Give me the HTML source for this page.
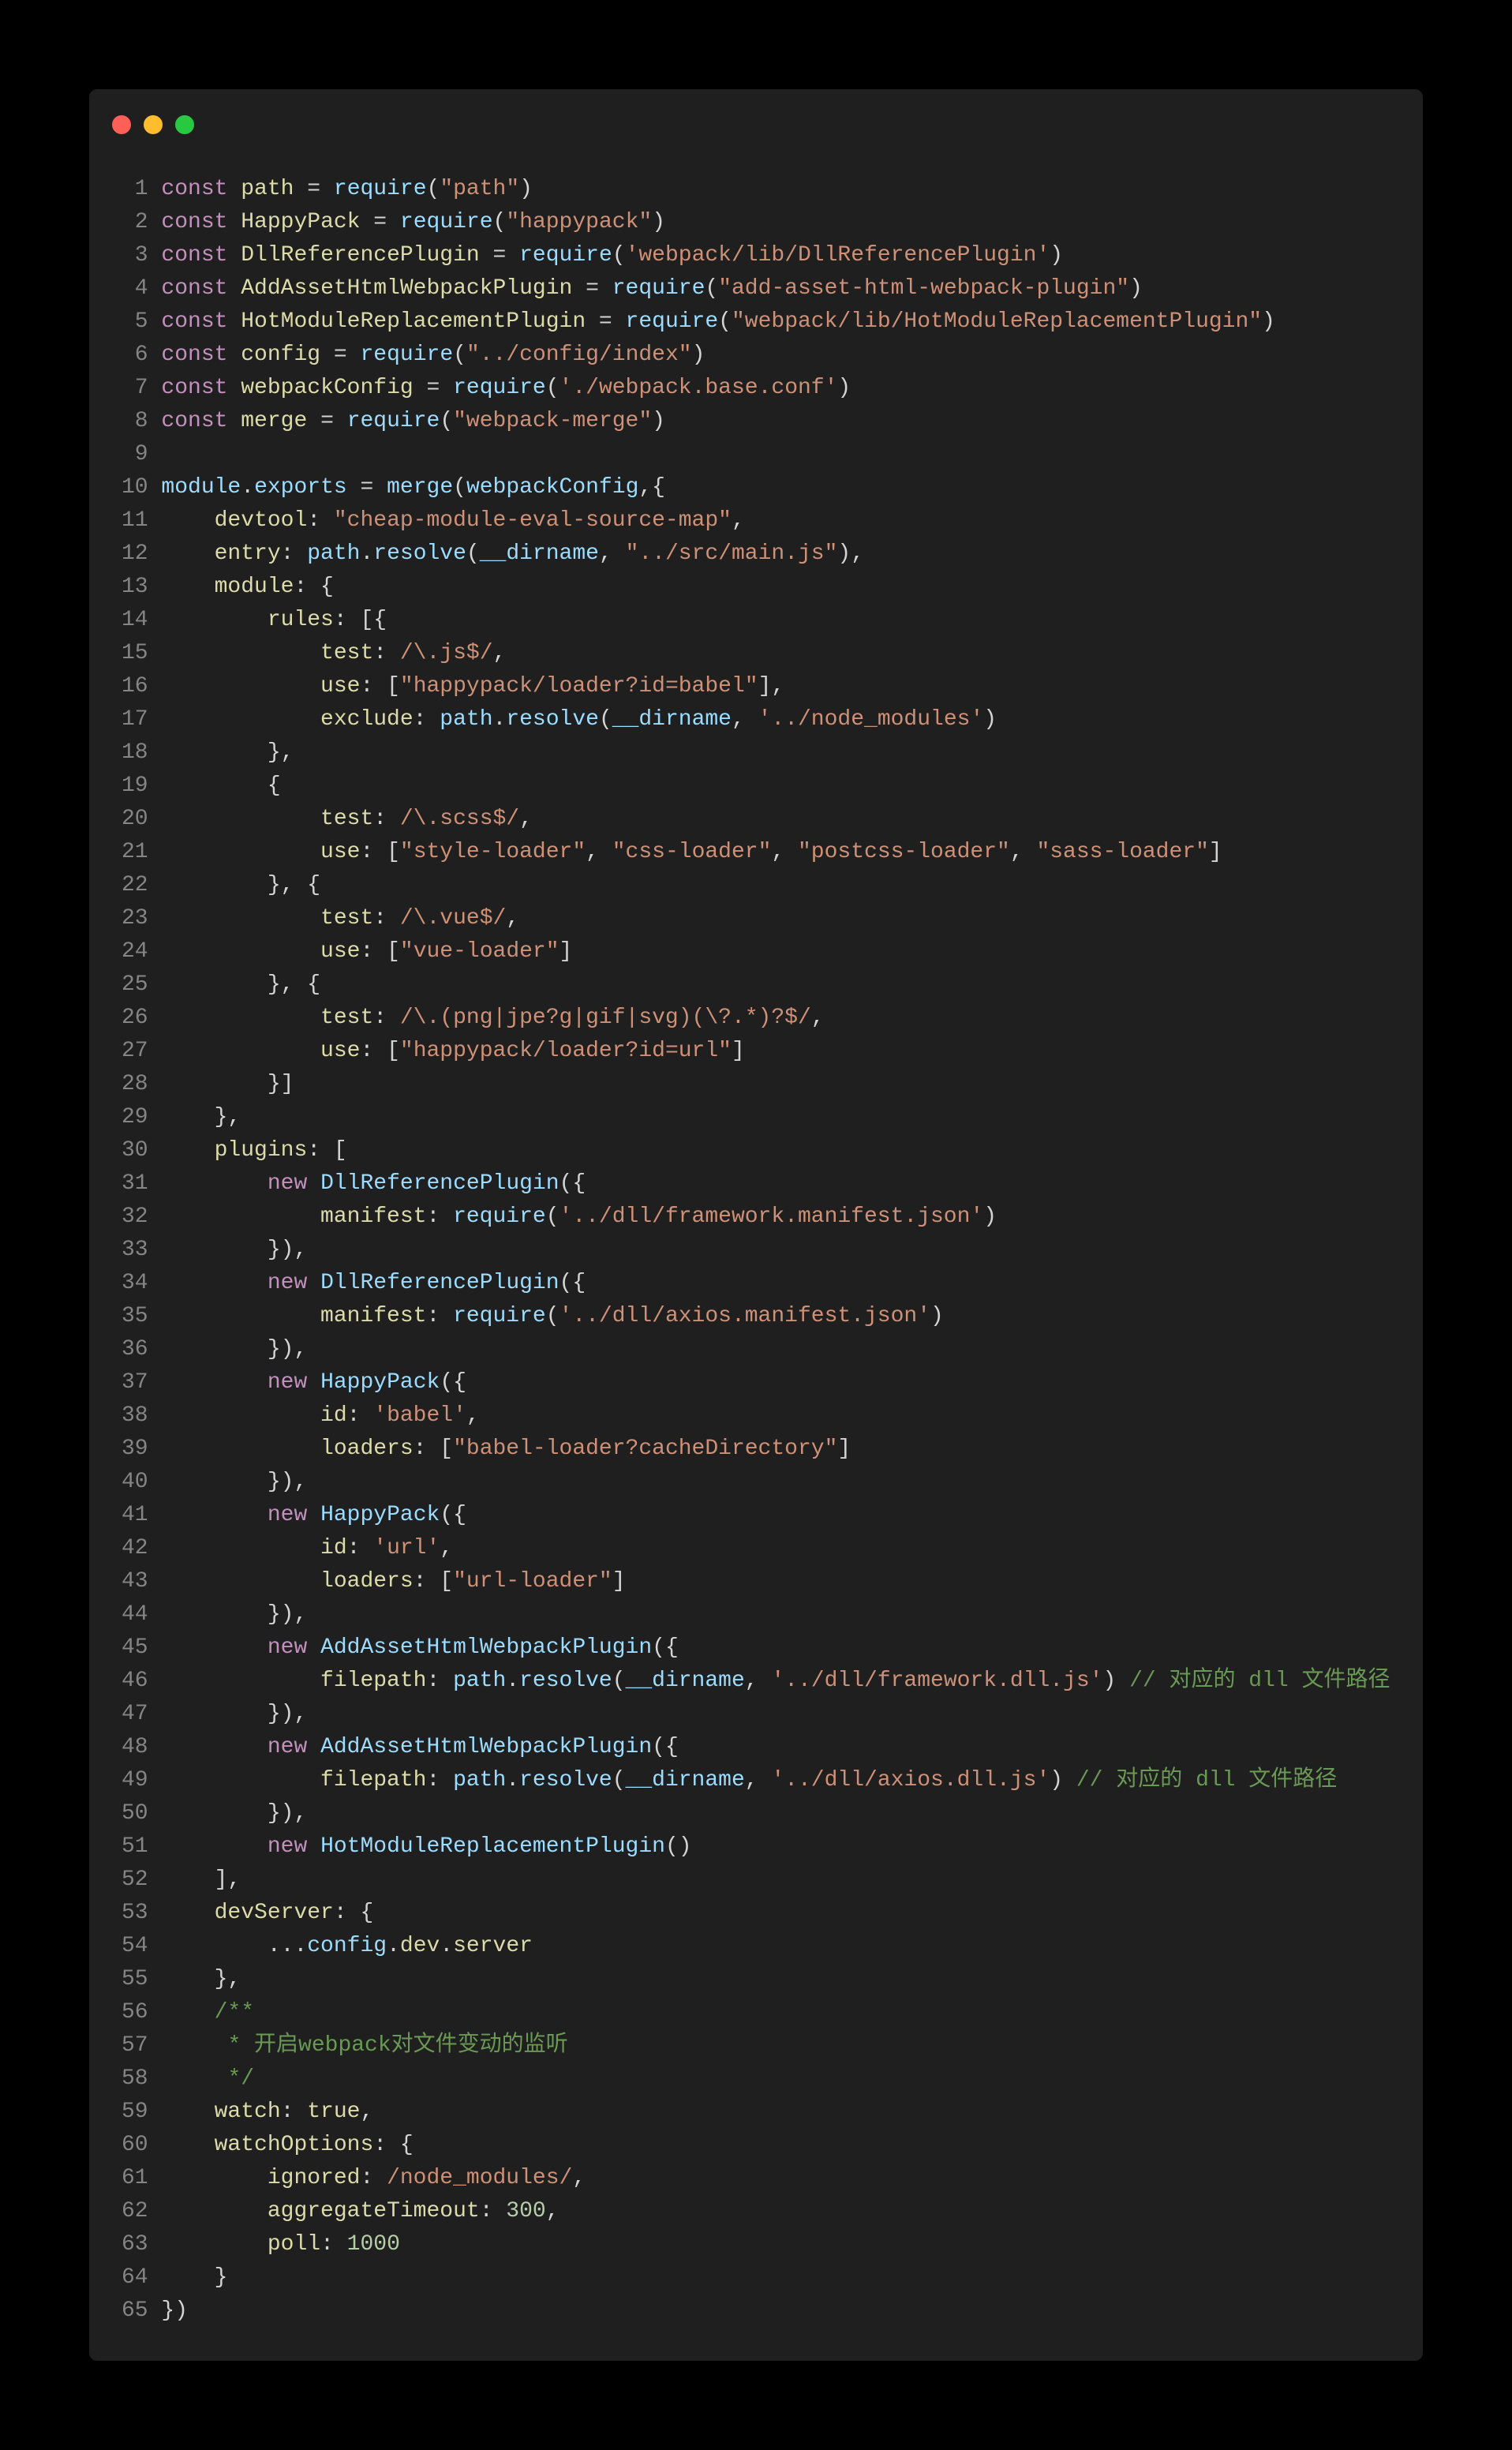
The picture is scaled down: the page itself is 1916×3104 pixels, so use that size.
<!DOCTYPE html>
<html><head><meta charset="utf-8"><style>
html,body{margin:0;padding:0;background:#000;width:1916px;height:3104px;overflow:hidden}
.card{position:absolute;left:113px;top:113px;width:1690px;height:2878px;background:#1f1f1f;border-radius:10px}
.dot{position:absolute;top:146px;width:24px;height:24px;border-radius:50%}
pre{position:absolute;left:154px;top:219px;margin:0;font-family:"Liberation Mono","Noto Sans CJK SC",monospace;font-size:28px;line-height:42px;color:#d4d4d4;white-space:pre}
.g{color:#858585}.k{color:#c390bd}.v{color:#dcdcaa}.f{color:#9cdcfe}.s{color:#ce9178}.n{color:#b5cea8}.c{color:#6a9955}
</style></head><body>
<div class="card"></div>
<div class="dot" style="left:142px;background:#fe5f57"></div>
<div class="dot" style="left:182px;background:#febc2e"></div>
<div class="dot" style="left:222px;background:#28c840"></div>
<pre><span class="g"> 1</span> <span class="k">const</span> <span class="v">path</span> = <span class="f">require</span>(<span class="s">"path"</span>)
<span class="g"> 2</span> <span class="k">const</span> <span class="v">HappyPack</span> = <span class="f">require</span>(<span class="s">"happypack"</span>)
<span class="g"> 3</span> <span class="k">const</span> <span class="v">DllReferencePlugin</span> = <span class="f">require</span>(<span class="s">'webpack/lib/DllReferencePlugin'</span>)
<span class="g"> 4</span> <span class="k">const</span> <span class="v">AddAssetHtmlWebpackPlugin</span> = <span class="f">require</span>(<span class="s">"add-asset-html-webpack-plugin"</span>)
<span class="g"> 5</span> <span class="k">const</span> <span class="v">HotModuleReplacementPlugin</span> = <span class="f">require</span>(<span class="s">"webpack/lib/HotModuleReplacementPlugin"</span>)
<span class="g"> 6</span> <span class="k">const</span> <span class="v">config</span> = <span class="f">require</span>(<span class="s">"../config/index"</span>)
<span class="g"> 7</span> <span class="k">const</span> <span class="v">webpackConfig</span> = <span class="f">require</span>(<span class="s">'./webpack.base.conf'</span>)
<span class="g"> 8</span> <span class="k">const</span> <span class="v">merge</span> = <span class="f">require</span>(<span class="s">"webpack-merge"</span>)
<span class="g"> 9</span>
<span class="g">10</span> <span class="f">module</span>.<span class="f">exports</span> = <span class="f">merge</span>(<span class="f">webpackConfig</span>,{
<span class="g">11</span>     <span class="v">devtool</span>: <span class="s">"cheap-module-eval-source-map"</span>,
<span class="g">12</span>     <span class="v">entry</span>: <span class="f">path</span>.<span class="f">resolve</span>(<span class="f">__dirname</span>, <span class="s">"../src/main.js"</span>),
<span class="g">13</span>     <span class="v">module</span>: {
<span class="g">14</span>         <span class="v">rules</span>: [{
<span class="g">15</span>             <span class="v">test</span>: <span class="s">/\.js$/</span>,
<span class="g">16</span>             <span class="v">use</span>: [<span class="s">"happypack/loader?id=babel"</span>],
<span class="g">17</span>             <span class="v">exclude</span>: <span class="f">path</span>.<span class="f">resolve</span>(<span class="f">__dirname</span>, <span class="s">'../node_modules'</span>)
<span class="g">18</span>         },
<span class="g">19</span>         {
<span class="g">20</span>             <span class="v">test</span>: <span class="s">/\.scss$/</span>,
<span class="g">21</span>             <span class="v">use</span>: [<span class="s">"style-loader"</span>, <span class="s">"css-loader"</span>, <span class="s">"postcss-loader"</span>, <span class="s">"sass-loader"</span>]
<span class="g">22</span>         }, {
<span class="g">23</span>             <span class="v">test</span>: <span class="s">/\.vue$/</span>,
<span class="g">24</span>             <span class="v">use</span>: [<span class="s">"vue-loader"</span>]
<span class="g">25</span>         }, {
<span class="g">26</span>             <span class="v">test</span>: <span class="s">/\.(png|jpe?g|gif|svg)(\?.*)?$/</span>,
<span class="g">27</span>             <span class="v">use</span>: [<span class="s">"happypack/loader?id=url"</span>]
<span class="g">28</span>         }]
<span class="g">29</span>     },
<span class="g">30</span>     <span class="v">plugins</span>: [
<span class="g">31</span>         <span class="k">new</span> <span class="f">DllReferencePlugin</span>({
<span class="g">32</span>             <span class="v">manifest</span>: <span class="f">require</span>(<span class="s">'../dll/framework.manifest.json'</span>)
<span class="g">33</span>         }),
<span class="g">34</span>         <span class="k">new</span> <span class="f">DllReferencePlugin</span>({
<span class="g">35</span>             <span class="v">manifest</span>: <span class="f">require</span>(<span class="s">'../dll/axios.manifest.json'</span>)
<span class="g">36</span>         }),
<span class="g">37</span>         <span class="k">new</span> <span class="f">HappyPack</span>({
<span class="g">38</span>             <span class="v">id</span>: <span class="s">'babel'</span>,
<span class="g">39</span>             <span class="v">loaders</span>: [<span class="s">"babel-loader?cacheDirectory"</span>]
<span class="g">40</span>         }),
<span class="g">41</span>         <span class="k">new</span> <span class="f">HappyPack</span>({
<span class="g">42</span>             <span class="v">id</span>: <span class="s">'url'</span>,
<span class="g">43</span>             <span class="v">loaders</span>: [<span class="s">"url-loader"</span>]
<span class="g">44</span>         }),
<span class="g">45</span>         <span class="k">new</span> <span class="f">AddAssetHtmlWebpackPlugin</span>({
<span class="g">46</span>             <span class="v">filepath</span>: <span class="f">path</span>.<span class="f">resolve</span>(<span class="f">__dirname</span>, <span class="s">'../dll/framework.dll.js'</span>) <span class="c">// 对应的 dll 文件路径</span>
<span class="g">47</span>         }),
<span class="g">48</span>         <span class="k">new</span> <span class="f">AddAssetHtmlWebpackPlugin</span>({
<span class="g">49</span>             <span class="v">filepath</span>: <span class="f">path</span>.<span class="f">resolve</span>(<span class="f">__dirname</span>, <span class="s">'../dll/axios.dll.js'</span>) <span class="c">// 对应的 dll 文件路径</span>
<span class="g">50</span>         }),
<span class="g">51</span>         <span class="k">new</span> <span class="f">HotModuleReplacementPlugin</span>()
<span class="g">52</span>     ],
<span class="g">53</span>     <span class="v">devServer</span>: {
<span class="g">54</span>         ...<span class="f">config</span>.<span class="v">dev</span>.<span class="v">server</span>
<span class="g">55</span>     },
<span class="g">56</span>     <span class="c">/**</span>
<span class="g">57</span>      <span class="c">* 开启webpack对文件变动的监听</span>
<span class="g">58</span>      <span class="c">*/</span>
<span class="g">59</span>     <span class="v">watch</span>: <span class="v">true</span>,
<span class="g">60</span>     <span class="v">watchOptions</span>: {
<span class="g">61</span>         <span class="v">ignored</span>: <span class="s">/node_modules/</span>,
<span class="g">62</span>         <span class="v">aggregateTimeout</span>: <span class="n">300</span>,
<span class="g">63</span>         <span class="v">poll</span>: <span class="n">1000</span>
<span class="g">64</span>     }
<span class="g">65</span> })</pre>
</body></html>
